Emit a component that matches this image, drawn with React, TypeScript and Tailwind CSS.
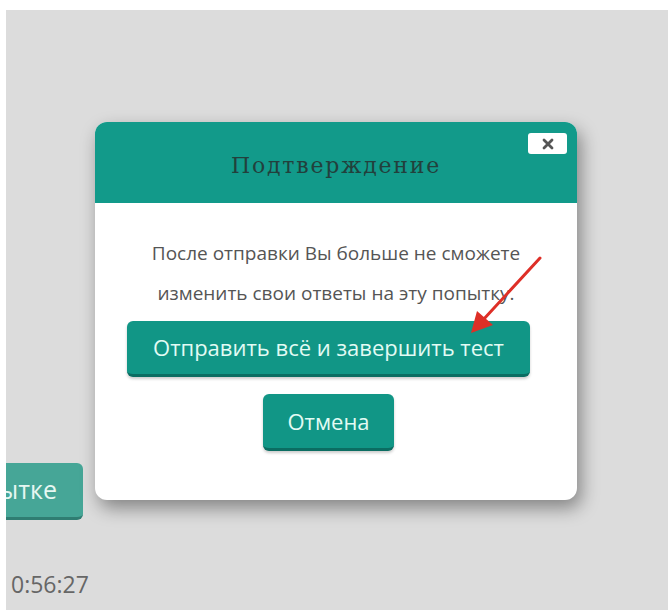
const CloseIcon = () => (
  <svg width="12" height="12" viewBox="0 0 12 12" fill="none">
    <path d="M2 2 L10 10 M10 2 L2 10" stroke="#555" strokeWidth="2.8" strokeLinecap="round" />
  </svg>
);

const Arrow = () => (
  <svg className="absolute left-[370px] top-[50px]" width="90" height="90" viewBox="0 0 90 90">
    <path d="M75 5 L18 67" stroke="#de2f27" strokeWidth="3" strokeLinecap="round" />
    <path d="M6 80 L12 58 L28 72 Z" fill="#de2f27" />
  </svg>
);

const ConfirmModal = () => {
  return (
    <div className="absolute left-[89px] top-[112px] w-[482px] h-[378px] bg-white rounded-[12px] shadow-[4px_8px_18px_rgba(0,0,0,0.4)]">
      <div className="relative h-[81px] bg-[#129a8a] rounded-t-[12px] flex items-center justify-center">
        <h2 className="text-[22px] tracking-[1.8px] text-[#22403c] font-['DejaVu_Serif',serif] pt-[6px]">
          Подтверждение
        </h2>
        <button className="absolute top-[11px] right-[10px] w-[39px] h-[21px] bg-white rounded-[3px] flex items-center justify-center">
          <CloseIcon />
        </button>
      </div>
      <div className="relative pt-[30px] font-['Open_Sans',sans-serif]">
        <p className="text-center text-[19px] leading-[40px] text-[#555]">
          После отправки Вы больше не сможете
          <br />
          изменить свои ответы на эту попытку.
        </p>
        <div className="flex flex-col items-center gap-[17px] mt-[8px] pr-[15px]">
          <button className="w-[403px] h-[56px] bg-[#119686] border-b-[3px] border-[#0b6d62] rounded-[6px] text-[22px] text-[#e2fbf4] shadow-[0_2px_3px_rgba(0,0,0,0.2)]">
            Отправить всё и завершить тест
          </button>
          <button className="w-[131px] h-[57px] bg-[#119686] border-b-[3px] border-[#0b6d62] rounded-[6px] text-[22px] text-[#e2fbf4] shadow-[0_2px_3px_rgba(0,0,0,0.2)]">
            Отмена
          </button>
        </div>
        <Arrow />
      </div>
    </div>
  );
};

export default function App() {
  return (
    <div className="h-[610px] bg-white pt-[10px] pl-[6px] overflow-hidden">
      <div className="relative h-[600px] bg-[#dcdcdc] overflow-hidden font-['Open_Sans',sans-serif]">
        <div className="flex flex-col pt-[453px]">
          <div className="w-[77px] h-[57px] flex justify-end overflow-hidden">
            <button className="shrink-0 h-[57px] pl-[20px] pr-[26px] bg-[#46a697] border-b-[3px] border-[#2f7d72] rounded-[6px] text-[25px] text-[#e6f7f2] whitespace-nowrap">
              Вернуться к попытке
            </button>
          </div>
          <div className="mt-[47px] pl-[5px] text-[23px] text-[#666]">0:56:27</div>
        </div>
        <ConfirmModal />
      </div>
    </div>
  );
}
